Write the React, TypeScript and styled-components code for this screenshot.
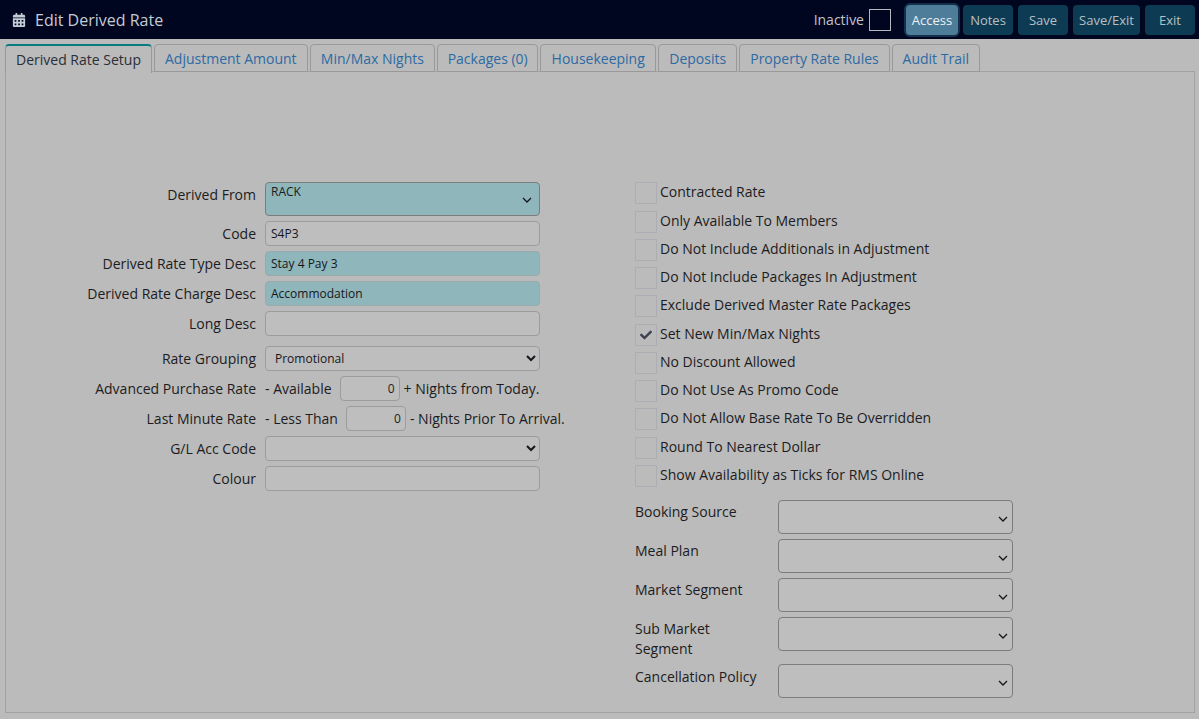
import styled, { createGlobalStyle } from 'styled-components';
import { FaCalendarAlt, FaCheck } from 'react-icons/fa';

const GlobalStyle = createGlobalStyle`
  html, body { margin: 0; padding: 0; height: 100%; background: #bbbbbb; }
  body { font-family: "Open Sans", "Liberation Sans", sans-serif; color: #1c1c22; overflow: hidden; }
  * { box-sizing: border-box; }
`;

const TABS = [
  { label: 'Derived Rate Setup', width: 147 },
  { label: 'Adjustment Amount', width: 153.6 },
  { label: 'Min/Max Nights', width: 125.6 },
  { label: 'Packages (0)', width: 101 },
  { label: 'Housekeeping', width: 116 },
  { label: 'Deposits', width: 79 },
  { label: 'Property Rate Rules', width: 150.6 },
  { label: 'Audit Trail', width: 88 },
];

const CHECKS = [
  'Contracted Rate',
  'Only Available To Members',
  'Do Not Include Additionals in Adjustment',
  'Do Not Include Packages In Adjustment',
  'Exclude Derived Master Rate Packages',
  'Set New Min/Max Nights',
  'No Discount Allowed',
  'Do Not Use As Promo Code',
  'Do Not Allow Base Rate To Be Overridden',
  'Round To Nearest Dollar',
  'Show Availability as Ticks for RMS Online',
];

const Chevron = () => (
  <svg width="10" height="6" viewBox="0 0 10 6" fill="none">
    <path d="M1 1l4 4 4-4" stroke="#15151c" strokeWidth="1.3" />
  </svg>
);

export default function App() {
  return (
    <>
      <GlobalStyle />
      <S.Page>
        <S.Header>
          <S.Title>
            <FaCalendarAlt size={14} color="#c4ccd6" />
            <span>Edit Derived Rate</span>
          </S.Title>
          <S.Actions>
            <S.InactiveLabel>Inactive</S.InactiveLabel>
            <S.InactiveBox />
            <S.Button $width={52} $active>
              Access
            </S.Button>
            <S.Button $width={50}>Notes</S.Button>
            <S.Button $width={50}>Save</S.Button>
            <S.Button $width={67}>Save/Exit</S.Button>
            <S.Button $width={50}>Exit</S.Button>
          </S.Actions>
        </S.Header>

        <S.TabBar>
          {TABS.map((tab, i) => (
            <S.Tab key={tab.label} $active={i === 0} $width={tab.width}>
              {tab.label}
            </S.Tab>
          ))}
        </S.TabBar>

        <S.Panel>
          <S.LeftColumn>
            <S.Label $top>Derived From</S.Label>
            <S.DropBox $teal>
              <S.DropValue>RACK</S.DropValue>
              <Chevron />
            </S.DropBox>

            <S.Label>Code</S.Label>
            <S.Field>S4P3</S.Field>

            <S.Label>Derived Rate Type Desc</S.Label>
            <S.Field $teal>Stay 4 Pay 3</S.Field>

            <S.Label>Derived Rate Charge Desc</S.Label>
            <S.Field $teal>Accommodation</S.Field>

            <S.Label>Long Desc</S.Label>
            <S.Field />

            <S.Label $spaced>Rate Grouping</S.Label>
            <S.NativeSelect $spaced defaultValue="Promotional">
              <option>Promotional</option>
            </S.NativeSelect>

            <S.Label>Advanced Purchase Rate</S.Label>
            <S.InlineRow>
              <S.InlineText>- Available</S.InlineText>
              <S.NumberBox>0</S.NumberBox>
              <span>+ Nights from Today.</span>
            </S.InlineRow>

            <S.Label>Last Minute Rate</S.Label>
            <S.InlineRow>
              <S.InlineText>- Less Than</S.InlineText>
              <S.NumberBox>0</S.NumberBox>
              <span>- Nights Prior To Arrival.</span>
            </S.InlineRow>

            <S.Label>G/L Acc Code</S.Label>
            <S.NativeSelect defaultValue="">
              <option value=""></option>
            </S.NativeSelect>

            <S.Label>Colour</S.Label>
            <S.Field />
          </S.LeftColumn>

          <S.RightColumn>
            <S.CheckList>
              {CHECKS.map((label) => (
                <S.CheckRow key={label}>
                  <S.CheckBox>
                    {label === 'Set New Min/Max Nights' && <FaCheck size={12} color="#3e4250" />}
                  </S.CheckBox>
                  <span>{label}</span>
                </S.CheckRow>
              ))}
            </S.CheckList>

            <S.SelectGrid>
              <S.SelectLabel>Booking Source</S.SelectLabel>
              <S.DropBox $large>
                <span />
                <Chevron />
              </S.DropBox>
              <S.SelectLabel>Meal Plan</S.SelectLabel>
              <S.DropBox $large>
                <span />
                <Chevron />
              </S.DropBox>
              <S.SelectLabel>Market Segment</S.SelectLabel>
              <S.DropBox $large>
                <span />
                <Chevron />
              </S.DropBox>
              <S.SelectLabel>
                Sub Market
                <br />
                Segment
              </S.SelectLabel>
              <S.DropBox $large>
                <span />
                <Chevron />
              </S.DropBox>
              <S.SelectLabel $last>Cancellation Policy</S.SelectLabel>
              <S.DropBox $large>
                <span />
                <Chevron />
              </S.DropBox>
            </S.SelectGrid>
          </S.RightColumn>
        </S.Panel>
      </S.Page>
    </>
  );
}

const S = {
  Page: styled.div`
    width: 1199px;
    height: 719px;
    background: #bbbbbb;
    display: flex;
    flex-direction: column;
  `,
  Header: styled.header`
    height: 39px;
    background: #000520;
    display: flex;
    align-items: center;
    justify-content: space-between;
    padding: 0 4px 0 12px;
  `,
  Title: styled.div`
    display: flex;
    align-items: center;
    gap: 9px;
    font-size: 16px;
    color: #c4ccd6;
  `,
  Actions: styled.div`
    display: flex;
    align-items: center;
    gap: 5px;
  `,
  InactiveLabel: styled.span`
    font-size: 14px;
    color: #c0c4cc;
  `,
  InactiveBox: styled.span`
    width: 22px;
    height: 22px;
    border: 1px solid #b4b8c0;
    margin-right: 10px;
  `,
  Button: styled.button<{ $width: number; $active?: boolean }>`
    width: ${(p) => p.$width}px;
    height: 30px;
    padding: 0;
    background: ${(p) => (p.$active ? '#4d7d99' : '#0d3b53')};
    border: 0;
    border-radius: 4px;
    color: ${(p) => (p.$active ? '#eef2f5' : '#b8c0c6')};
    font: 13px "Open Sans", sans-serif;
    ${(p) => p.$active && 'box-shadow: 0 0 0 2px #14304c;'}
  `,
  TabBar: styled.div`
    height: 33px;
    padding: 5px 0 0 5px;
    display: flex;
    gap: 2px;
    position: relative;
    z-index: 1;
  `,
  Tab: styled.div<{ $active?: boolean; $width: number }>`
    width: ${(p) => p.$width}px;
    height: ${(p) => (p.$active ? '29px' : '28px')};
    border: 1px solid #999999;
    border-top: ${(p) => (p.$active ? '2px solid #0a7c80' : '1px solid #999999')};
    border-bottom: ${(p) => (p.$active ? '0' : '1px solid #999999')};
    border-radius: 4px 4px 0 0;
    background: #bbbbbb;
    color: ${(p) => (p.$active ? '#2a2e38' : '#2d6aa3')};
    font-size: 14px;
    display: flex;
    align-items: center;
    justify-content: center;
  `,
  Panel: styled.main`
    width: 1190px;
    height: 642px;
    margin-left: 5px;
    margin-top: -1px;
    padding-top: 110px;
    border: 1px solid #a2a2a2;
    display: flex;
    align-items: flex-start;
  `,
  LeftColumn: styled.div`
    width: 535px;
    display: grid;
    grid-template-columns: 250px 275px;
    column-gap: 9px;
    row-gap: 5px;
    align-items: center;
    font-size: 14px;
  `,
  Label: styled.label<{ $spaced?: boolean; $top?: boolean }>`
    text-align: right;
    font-size: 14px;
    white-space: nowrap;
    ${(p) => p.$spaced && 'margin-top: 5px;'}
    ${(p) => p.$top && 'align-self: start; margin-top: 3px;'}
  `,
  Field: styled.div<{ $teal?: boolean }>`
    height: 25px;
    border: 1px solid ${(p) => (p.$teal ? '#9aa9ab' : '#9c9c9c')};
    border-radius: 4px;
    background: ${(p) => (p.$teal ? '#8fb6bb' : '#bebebe')};
    padding: 0 5px;
    font-size: 12px;
    line-height: 23px;
    color: #16161c;
  `,
  DropBox: styled.div<{ $teal?: boolean; $large?: boolean }>`
    height: 34px;
    border: 1px solid #7c7c7c;
    border-radius: 4px;
    background: ${(p) => (p.$teal ? '#8fb6bb' : '#bebebe')};
    padding: 0 ${(p) => (p.$large ? '4px' : '7px')} 0 5px;
    display: flex;
    align-items: center;
    justify-content: space-between;
    svg { margin-top: ${(p) => (p.$large ? '4px' : '2px')}; }
  `,
  DropValue: styled.span`
    font-size: 12px;
    align-self: flex-start;
    line-height: 17px;
  `,
  NativeSelect: styled.select<{ $spaced?: boolean }>`
    height: 25px;
    width: 100%;
    border: 1px solid #9c9c9c;
    border-radius: 4px;
    background-color: #bebebe;
    padding: 0 5px;
    font: 12px "Open Sans", sans-serif;
    color: #16161c;
    ${(p) => p.$spaced && 'margin-top: 5px;'}
  `,
  InlineRow: styled.div`
    height: 25px;
    display: flex;
    align-items: center;
    white-space: nowrap;
    font-size: 14px;
  `,
  InlineText: styled.span`
    margin-right: 8px;
  `,
  NumberBox: styled.div`
    width: 60px;
    height: 25px;
    flex: none;
    margin-right: 4px;
    border: 1px solid #9c9c9c;
    border-radius: 4px;
    background: #bebebe;
    text-align: right;
    padding-right: 4px;
    font-size: 12px;
    line-height: 23px;
  `,
  RightColumn: styled.div`
    margin-left: 94px;
    width: 378px;
    display: flex;
    flex-direction: column;
  `,
  CheckList: styled.div`
    display: grid;
    grid-auto-rows: 22px;
    row-gap: 6.25px;
    margin-top: 0.25px;
    font-size: 14px;
  `,
  CheckRow: styled.div`
    display: flex;
    align-items: flex-start;
    gap: 3px;
    line-height: 20px;
    white-space: nowrap;
  `,
  CheckBox: styled.span`
    width: 22px;
    height: 22px;
    flex: none;
    border: 1px solid #adadb4;
    display: flex;
    align-items: center;
    justify-content: center;
  `,
  SelectGrid: styled.div`
    margin-top: 13.25px;
    display: grid;
    grid-template-columns: 143px 235px;
    row-gap: 5px;
    font-size: 14px;
  `,
  SelectLabel: styled.div<{ $last?: boolean }>`
    line-height: 20px;
    padding-top: ${(p) => (p.$last ? '3px' : '2px')};
  `,
};
